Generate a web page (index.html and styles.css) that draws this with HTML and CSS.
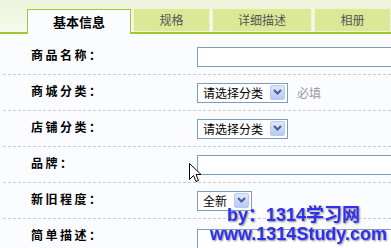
FILE: index.html
```html
<!DOCTYPE html>
<html lang="zh">

<head>
    <meta charset="utf-8">
    <meta name="viewport" content="width=device-width, initial-scale=1.0">
    <title>商品信息</title>
    <link rel="stylesheet" href="styles.css">
</head>

<body>
    <div class="tabs">
        <div class="tab valgt">基本信息</div>
        <div class="tab">规格</div>
        <div class="tab bred">详细描述</div>
        <div class="tab">相册</div>
        <div class="tab rest"></div>
    </div>

    <form class="skema">
        <div class="row">
            <label class="navn">商品名称：</label>
            <input class="felt" type="text">
        </div>
        <div class="row">
            <label class="navn">商城分类：</label>
            <div class="vaelg">
                <span>请选择分类</span>
                <i class="pil"><svg width="15" height="14" viewBox="0 0 15 14"><path d="M4 5 L7.5 8.5 L11 5" fill="none" stroke="#4a5e8a" stroke-width="2"/></svg></i>
            </div>
            <span class="krav">必填</span>
        </div>
        <div class="row">
            <label class="navn">店铺分类：</label>
            <div class="vaelg">
                <span>请选择分类</span>
                <i class="pil"><svg width="15" height="14" viewBox="0 0 15 14"><path d="M4 5 L7.5 8.5 L11 5" fill="none" stroke="#4a5e8a" stroke-width="2"/></svg></i>
            </div>
        </div>
        <div class="row">
            <label class="navn">品牌：</label>
            <input class="felt" type="text">
        </div>
        <div class="row">
            <label class="navn">新旧程度：</label>
            <div class="vaelg lille">
                <span>全新</span>
                <i class="pil"><svg width="15" height="14" viewBox="0 0 15 14"><path d="M4 5 L7.5 8.5 L11 5" fill="none" stroke="#4a5e8a" stroke-width="2"/></svg></i>
            </div>
        </div>
        <div class="row top">
            <label class="navn">简单描述：</label>
            <textarea class="tekst"></textarea>
        </div>
    </form>

    <div class="vandmaerke">
        <div class="linje1">by：1314学习网</div>
        <div>www.1314Study.com</div>
    </div>

    <svg class="cursor" width="13" height="21" viewBox="0 0 13 21">
        <path d="M0.5 0.5 V16.5 L4.5 12.5 L7 18.5 L9.5 17.5 L7 11.5 H12 Z" fill="#fff" stroke="#000" stroke-width="1"/>
    </svg>
</body>

</html>
```

FILE: styles.css
```css
html,
body {
    margin: 0;
    overflow: hidden;
}

body {
    position: relative;
    width: 391px;
    height: 248px;
    background-color: #fbfcff;
    font-family: "Noto Sans CJK SC", sans-serif;
    font-size: 12px;
}

/* FANEBLADE */

.tabs {
    display: flex;
    align-items: flex-end;
    height: 32px;
    padding-left: 27px;
    border-bottom: 2px solid #a0c832;
    background: linear-gradient(#eef3dc, #f6f9ec);
}

.tab {
    flex-shrink: 0;
    box-sizing: border-box;
    height: 24px;
    width: 77px;
    margin-left: 2px;
    border: 1px solid #eef4d4;
    background-color: #dbe895;
    color: #555;
    font-size: 12px;
    line-height: 22px;
    text-align: center;
}

.tab.bred {
    width: 100px;
}

.tab.rest {
    width: 3px;
    border-right: none;
}

.tab.valgt {
    width: 104px;
    height: 25px;
    margin-left: 0;
    margin-bottom: -2px;
    border: 1px solid #a0c832;
    border-bottom: none;
    background-color: #fbfcff;
    color: #000;
    font-size: 13px;
    font-weight: bold;
    line-height: 24px;
}

/* SKEMA */

.skema {
    margin: 5px 0 0 3px;
}

.row {
    display: flex;
    align-items: center;
    height: 35px;
    border-bottom: 1px dashed #ccc;
}

.row.top {
    align-items: flex-start;
    height: 29px;
    border-bottom: none;
}

.navn {
    flex-shrink: 0;
    width: 166px;
    padding-left: 28px;
    margin-bottom: 4px;
    font-weight: bold;
    letter-spacing: 2.5px;
    line-height: 18px;
}

.row.top .navn {
    margin: 7px 0 0;
}

.felt {
    box-sizing: border-box;
    width: 194px;
    height: 20px;
    margin: 0;
    border: 1px solid #7f9db9;
    border-right: none;
    background-color: #fff;
}

.tekst {
    box-sizing: border-box;
    width: 194px;
    height: 19px;
    margin: 10px 0 0;
    border: 1px solid #7f9db9;
    border-right: none;
    border-bottom: none;
    background-color: #fff;
    resize: none;
}

.vaelg {
    display: flex;
    align-items: center;
    justify-content: space-between;
    box-sizing: border-box;
    width: 91px;
    height: 20px;
    padding: 0 2px 0 5px;
    border: 1px solid #7f9db9;
    background-color: #fff;
    color: #000;
}

.vaelg.lille {
    width: 55px;
}

.pil {
    display: block;
    box-sizing: border-box;
    width: 15px;
    height: 15px;
    border: 1px solid #b7caf3;
    border-radius: 2px;
    background: linear-gradient(#dfe8fd, #b6c8f5);
}

.pil svg {
    display: block;
    margin: -1px 0 0 -1px;
}

.krav {
    margin-left: 9px;
    color: #999;
}

/* VANDMAERKE */

.vandmaerke {
    position: absolute;
    left: 210px;
    top: 206px;
    color: #3030f0;
    font-family: "Liberation Sans", "Noto Sans CJK SC", sans-serif;
    font-size: 18px;
    font-weight: bold;
    line-height: 19px;
    white-space: nowrap;
    text-shadow: 1px 1px 2px #888;
}

.linje1 {
    padding-left: 17px;
}

.cursor {
    position: absolute;
    left: 189px;
    top: 163px;
}
```
